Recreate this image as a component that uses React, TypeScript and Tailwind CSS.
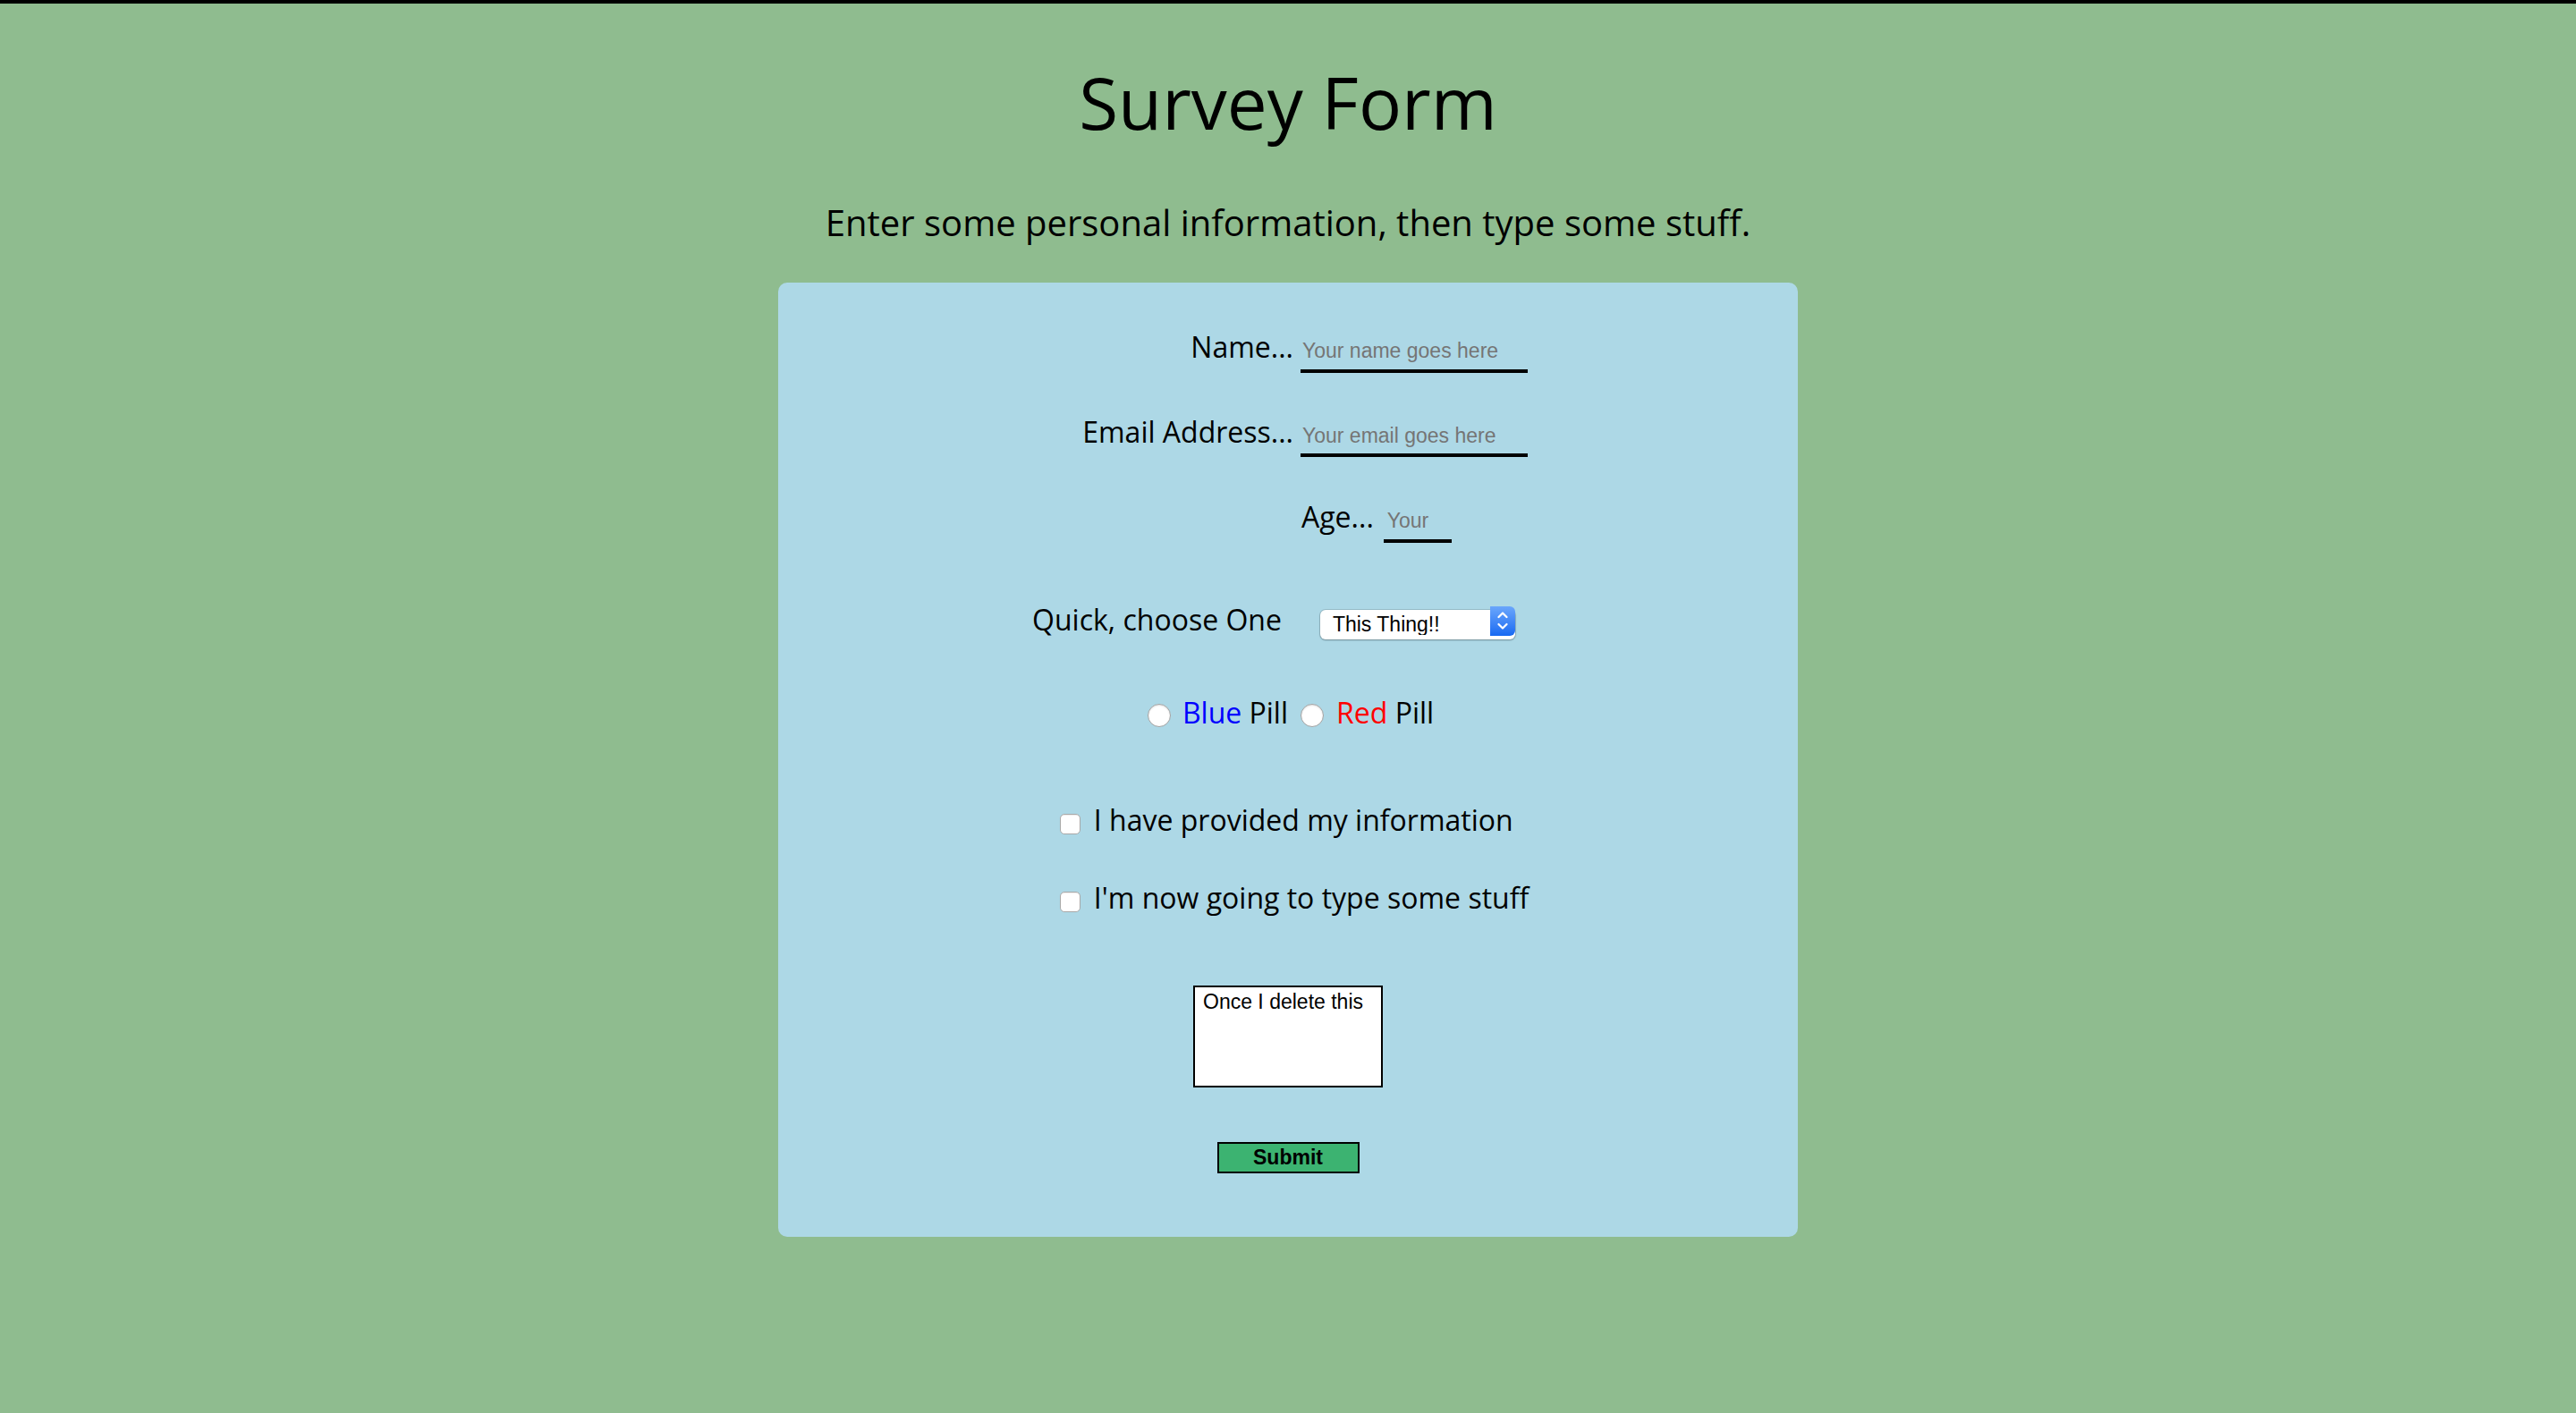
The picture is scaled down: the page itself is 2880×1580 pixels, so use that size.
import React from "react";

const SelectArrows = () => (
  <svg width="12" height="22" viewBox="0 0 12 22" fill="none" stroke="white" strokeWidth="2.2" strokeLinecap="round" strokeLinejoin="round">
    <path d="M1.5 7 L6 2.5 L10.5 7" />
    <path d="M1.5 15 L6 19.5 L10.5 15" />
  </svg>
);

const Radio = (props: { name: string, className?: string }) => (
  <input
    type="radio"
    name={props.name}
    className={"appearance-none w-[26px] h-[26px] rounded-full border border-[#a3a3a3] bg-white shadow-[inset_0_1px_2px_rgba(0,0,0,0.12)] " + (props.className ?? "")}
  />
);

const Check = () => (
  <input
    type="checkbox"
    className="appearance-none w-[23px] h-[23px] mt-[9px] rounded-[5px] border border-[#a8a8a8] bg-white shadow-[inset_0_1px_1px_rgba(0,0,0,0.08)]"
  />
);

const App = () => {
  return <div className="min-h-screen bg-[#8fbc8f] border-t-4 border-black font-['Open_Sans',sans-serif] text-black">
    <h1 className="pt-[70px] text-center text-[80px] leading-none font-normal">Survey Form</h1>
    <p className="mt-[75px] text-center text-[40px] leading-none">Enter some personal information, then type some stuff.</p>

    <form className="mx-auto mt-[47px] w-[1140px] rounded-[10px] bg-[#add8e6] pt-[56px] pb-[71px] flex flex-col text-[32px] leading-none" onSubmit={(ev) => ev.preventDefault()}>
      <div className="flex items-baseline">
        <label className="w-[576px] text-right">Name...</label>
        <input type="text" placeholder="Your name goes here" className="ml-[8px] w-[254px] h-[44px] border-b-4 border-black pl-[2px] font-['Liberation_Sans',Arial,sans-serif] text-[23px] leading-none placeholder:text-[#757575] outline-none" />
      </div>
      <div className="flex items-baseline mt-[50px]">
        <label className="w-[576px] text-right">Email Address...</label>
        <input type="email" placeholder="Your email goes here" className="ml-[8px] w-[254px] h-[44px] border-b-4 border-black pl-[2px] font-['Liberation_Sans',Arial,sans-serif] text-[23px] leading-none placeholder:text-[#757575] outline-none" />
      </div>
      <div className="flex items-baseline mt-[51px]">
        <div className="w-[576px]"></div>
        <label className="ml-[9px]">Age...</label>
        <input type="text" placeholder="Your" className="ml-[11px] w-[76px] h-[44px] border-b-4 border-black pl-[4px] font-['Liberation_Sans',Arial,sans-serif] text-[23px] leading-none placeholder:text-[#757575] outline-none" />
      </div>

      <div className="flex items-start justify-center pr-[32px] mt-[70px]">
        <label>Quick, choose One</label>
        <div className="relative ml-[43px] mt-[1px] w-[218px] h-[33px]">
          <select className="appearance-none w-full h-full rounded-[6px] bg-white pl-[14px] pr-[30px] font-['Liberation_Sans',Arial,sans-serif] text-[23px] text-black shadow-[0_0_0_1px_rgba(0,0,0,0.12),0_1px_2px_rgba(0,0,0,0.25)] outline-none">
            <option>This Thing!!</option>
            <option>That Thing!!</option>
            <option>The Other Thing!!</option>
          </select>
          <div className="pointer-events-none absolute right-0 top-0 h-full w-[28px] rounded-r-[6px] bg-gradient-to-b from-[#6aa6fb] to-[#1669f2] flex items-center justify-center">
            <SelectArrows />
          </div>
        </div>
      </div>

      <div className="flex items-start justify-center pl-[6px] mt-[70px]">
        <Radio name="pill" className="mt-[6px] mr-[13px]" />
        <span><span className="text-[#0000ff]">Blue</span> Pill</span>
        <Radio name="pill" className="mt-[6px] ml-[14px] mr-[14px]" />
        <span><span className="text-[#ff0000]">Red</span> Pill</span>
      </div>

      <div className="mx-auto w-fit pl-[14px] flex flex-col items-start mt-[88px]">
        <label className="flex items-start">
          <Check />
          <span className="ml-[15px]">I have provided my information</span>
        </label>
        <label className="flex items-start mt-[55px]">
          <Check />
          <span className="ml-[15px]">I'm now going to type some stuff</span>
        </label>
      </div>

      <textarea
        defaultValue="Once I delete this"
        className="mx-auto mt-[82px] block w-[212px] h-[114px] border-2 border-black bg-white pl-[9px] pt-[6px] font-['Liberation_Sans',Arial,sans-serif] text-[23px] leading-[20px] resize-none outline-none"
      />

      <button type="submit" className="mx-auto mt-[61px] block w-[159px] h-[35px] border-2 border-black bg-[#3cb371] font-['Liberation_Sans',Arial,sans-serif] text-[23px] font-bold leading-none text-black">
        Submit
      </button>
    </form>
  </div>
}

export default App;
